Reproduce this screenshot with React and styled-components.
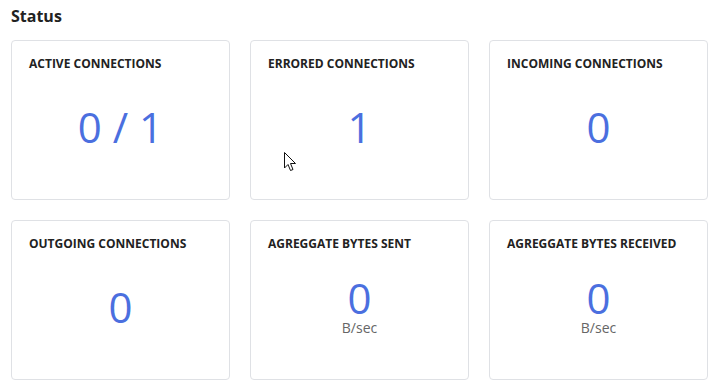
import React from 'react';
import styled, { createGlobalStyle } from 'styled-components';

const GlobalStyle = createGlobalStyle`
	body {
		margin: 0;
		background: white;
		font-family: "Open Sans", "Noto Sans", sans-serif;
		color: #222;
	}
`;

const Page = styled.div`
	position: relative;
	padding: 5px 12px 0 11px;
	width: 720px;
	height: 390px;
	box-sizing: border-box;
`;

const Heading = styled.h2`
	margin: 0;
	font-size: 16px;
	font-weight: 700;
	line-height: 22px;
	height: 35px;
`;

const Grid = styled.div`
	display: grid;
	grid-template-columns: repeat(3, 219px);
	grid-auto-rows: 160px;
	column-gap: 20px;
	row-gap: 20px;
`;

const Card = styled.div`
	display: flex;
	flex-direction: column;
	box-sizing: border-box;
	padding: 14px 17px 18px 17px;
	border: 1px solid #dfe1e5;
	border-radius: 4px;
	background: white;
`;

const Label = styled.div`
	font-size: 12px;
	font-weight: 700;
	line-height: 17px;
	text-transform: uppercase;
	color: #222;
`;

const Body = styled.div`
	flex: 1;
	display: flex;
	flex-direction: column;
	align-items: center;
	justify-content: center;
`;

const Value = styled.div`
	font-size: 42px;
	line-height: 41px;
	color: #4b6fdf;
`;

const Unit = styled.div`
	font-size: 14px;
	line-height: 19px;
	color: #666;
`;

const Cursor = styled.svg`
	position: absolute;
	left: 284px;
	top: 152px;
`;

const stats = [
	{ label: 'Active connections', value: '0 / 1' },
	{ label: 'Errored connections', value: '1' },
	{ label: 'Incoming connections', value: '0' },
	{ label: 'Outgoing connections', value: '0' },
	{ label: 'Agreggate bytes sent', value: '0', unit: 'B/sec' },
	{ label: 'Agreggate bytes received', value: '0', unit: 'B/sec' },
];

const App = () => {
	return (
		<Page>
			<GlobalStyle />
			<Heading>Status</Heading>
			<Grid>
				{stats.map(s => (
					<Card key={s.label}>
						<Label>{s.label}</Label>
						<Body>
							<Value>{s.value}</Value>
							{s.unit && <Unit>{s.unit}</Unit>}
						</Body>
					</Card>
				))}
			</Grid>
			<Cursor width="13" height="21" viewBox="0 0 13 21">
				<path d="M0.5 0.5 L0.5 16 L4 12.5 L6.5 18.5 L9 17.5 L6.5 11.5 L11.5 11.5 Z" fill="white" stroke="#111" strokeWidth="1" strokeLinejoin="miter" />
			</Cursor>
		</Page>
	)
}

export default App;
